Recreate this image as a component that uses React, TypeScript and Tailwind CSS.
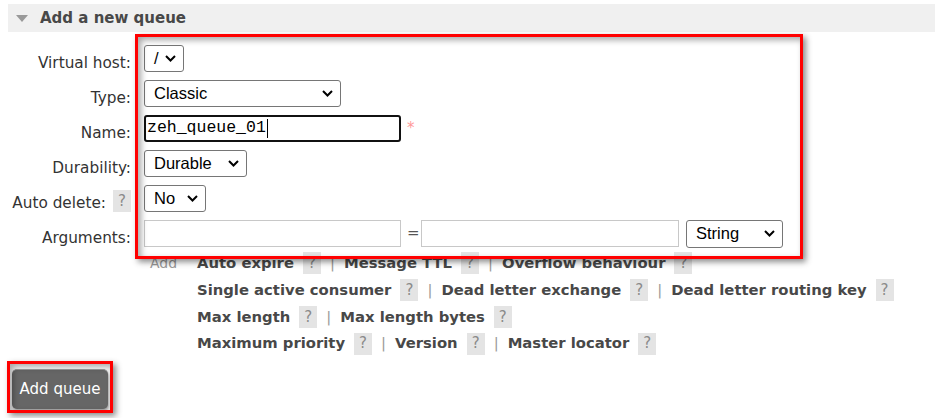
import type { ReactNode } from 'react';

const Chevron = () => (
    <svg width="11" height="7" viewBox="0 0 11 7" className="shrink-0">
        <path d="M1 1l4.5 4.5L10 1" stroke="#000" strokeWidth="2" fill="none" />
    </svg>
);

const FakeSelect = ({ value, className }: { value: string; className: string }) => (
    <div
        className={`flex h-[27px] items-center justify-between rounded-[3px] border border-[#767676] bg-white pl-[9px] pr-[7px] font-['Liberation_Sans',Arial,sans-serif] text-[16.5px] text-black ${className}`}
    >
        <span>{value}</span>
        <Chevron />
    </div>
);

const Help = () => (
    <span className="inline-flex h-[22px] w-[18px] shrink-0 items-center justify-center bg-[#e4e4e4] text-[15px] font-normal text-[#8a8a8a]">?</span>
);

const Row = ({ label, children }: { label: ReactNode; children: ReactNode }) => (
    <div className="flex h-[27px]">
        <div className="flex w-[131px] justify-end pt-[8px] text-[15.3px] leading-[20px] text-[#333]">{label}</div>
        <div className="ml-[13px] flex items-center">{children}</div>
    </div>
);

const Sep = () => <span className="mx-[9px] font-normal text-[#999]">|</span>;

const Opt = ({ name }: { name: string }) => (
    <>
        <span>{name}</span>
        <span className="ml-[9px]">
            <Help />
        </span>
    </>
);

const App = () => {
    return (
        <div className="relative h-[418px] w-[935px] overflow-hidden bg-white font-['DejaVu_Sans',Verdana,sans-serif]">
            <div className="ml-[8px] mt-[4px] flex h-[28px] items-center gap-[12px] bg-[#f0f0f0] pl-[8px] pt-[1px]">
                <svg width="12" height="7" viewBox="0 0 12 7">
                    <polygon points="0,0 12,0 6,7" fill="#999" />
                </svg>
                <span className="text-[15px] font-bold text-[#484848]">Add a new queue</span>
            </div>

            <div className="mt-[13px] flex flex-col gap-[8px]">
                <Row label="Virtual host:">
                    <FakeSelect value="/" className="w-[40px]" />
                </Row>
                <Row label="Type:">
                    <FakeSelect value="Classic" className="w-[197px]" />
                </Row>
                <Row label="Name:">
                    <div className="flex h-[27px] w-[257px] items-center rounded-[3px] border-2 border-[#111] pl-[1px] font-['Liberation_Mono','Courier_New',monospace] text-[16.5px] text-black">
                        <span>zeh_queue_01</span>
                        <span className="ml-[1px] h-[19px] w-px bg-black" />
                    </div>
                    <span className="ml-[6px] self-start pt-[2px] text-[15px] text-[#f99]">*</span>
                </Row>
                <Row label="Durability:">
                    <FakeSelect value="Durable" className="w-[103px]" />
                </Row>
                <Row
                    label={
                        <span className="flex items-start">
                            <span>Auto delete:</span>
                            <span className="-mt-[3px] ml-[7px]">
                                <Help />
                            </span>
                        </span>
                    }
                >
                    <FakeSelect value="No" className="w-[62px]" />
                </Row>
                <Row label="Arguments:">
                    <div className="h-[27px] w-[257px] border border-[#c8c8c8] bg-white" />
                    <span className="mx-[6px] w-[8px] text-[15px] text-[#555]">=</span>
                    <div className="h-[27px] w-[258px] border border-[#c8c8c8] bg-white" />
                    <FakeSelect value="String" className="ml-[7px] h-[28px] w-[97px]" />
                </Row>
            </div>

            <div className="ml-[150px] mt-[3px] flex">
                <span className="w-[47px] text-[14px] leading-[26.7px] text-[#999]">Add</span>
                <div className="flex flex-col text-[14.8px] font-bold text-[#484848]">
                    <div className="flex h-[26.7px] items-center">
                        <Opt name="Auto expire" />
                        <Sep />
                        <Opt name="Message TTL" />
                        <Sep />
                        <Opt name="Overflow behaviour" />
                    </div>
                    <div className="flex h-[26.7px] items-center">
                        <Opt name="Single active consumer" />
                        <Sep />
                        <Opt name="Dead letter exchange" />
                        <Sep />
                        <Opt name="Dead letter routing key" />
                    </div>
                    <div className="flex h-[26.7px] items-center">
                        <Opt name="Max length" />
                        <Sep />
                        <Opt name="Max length bytes" />
                    </div>
                    <div className="flex h-[26.7px] items-center">
                        <Opt name="Maximum priority" />
                        <Sep />
                        <Opt name="Version" />
                        <Sep />
                        <Opt name="Master locator" />
                    </div>
                </div>
            </div>

            <button className="ml-[12px] mt-[12px] h-[40px] w-[96px] rounded-[5px] border-t border-[#999] bg-[#666] text-[15px] text-white shadow-[1px_2px_3px_rgba(0,0,0,0.4)]">
                Add queue
            </button>

            <div className="pointer-events-none absolute left-[135px] top-[34px] h-[225px] w-[668px] border-[3px] border-[#f00] shadow-[3px_3px_6px_rgba(0,0,0,0.45),inset_3px_3px_6px_rgba(0,0,0,0.35)]" />
            <div className="pointer-events-none absolute left-[7px] top-[361px] h-[52px] w-[106px] border-[3px] border-[#f00] shadow-[3px_3px_6px_rgba(0,0,0,0.45),inset_3px_3px_6px_rgba(0,0,0,0.35)]" />
        </div>
    );
};

export default App;
